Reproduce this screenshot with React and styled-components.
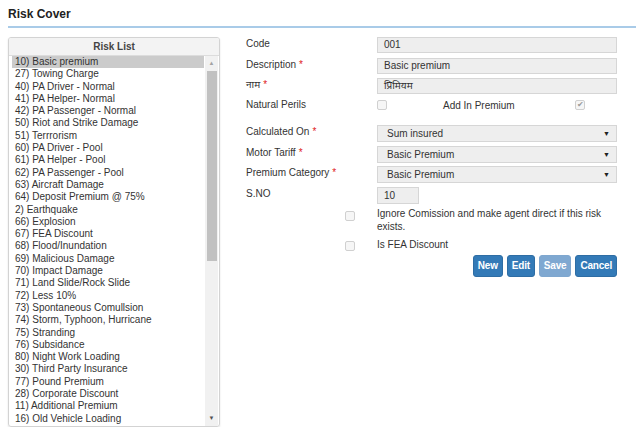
import React from 'react';
import styled, { createGlobalStyle } from 'styled-components';

const GlobalStyle = createGlobalStyle`
  * { box-sizing: border-box; }
  body {
    margin: 0;
    background: #fff;
    font-family: "Liberation Sans", Arial, "Noto Sans", sans-serif;
    font-size: 10px;
    color: #333;
  }
`;

const risks = [
  '10) Basic premium', '27) Towing Charge', '40) PA Driver - Normal', '41) PA Helper- Normal',
  '42) PA Passenger - Normal', '50) Riot and Strike Damage', '51) Terrrorism', '60) PA Driver - Pool',
  '61) PA Helper - Pool', '62) PA Passenger - Pool', '63) Aircraft Damage', '64) Deposit Premium @ 75%',
  '2) Earthquake', '66) Explosion', '67) FEA Discount', '68) Flood/Inundation', '69) Malicious Damage',
  '70) Impact Damage', '71) Land Slide/Rock Slide', '72) Less 10%', '73) Spontaneous Comullsion',
  '74) Storm, Typhoon, Hurricane', '75) Stranding', '76) Subsidance', '80) Night Work Loading',
  '30) Third Party Insurance', '77) Pound Premium', '28) Corporate Discount', '11) Additional Premium',
  '16) Old Vehicle Loading',
];

const Page = styled.div`
  padding: 7px 0 0 8px;
`;

const Title = styled.h1`
  margin: 0;
  font-size: 12px;
  line-height: 14px;
  font-weight: bold;
  color: #222;
`;

const Rule = styled.div`
  height: 2px;
  background: #a9cbe8;
  margin: 5px 0 9px;
`;

const Body = styled.div`
  display: flex;
  align-items: flex-start;
  gap: 26px;
`;

const Panel = styled.div`
  width: 212px;
  height: 390px;
  border: 1px solid #d3d3d3;
  border-radius: 3px;
  box-shadow: 0 1px 2px rgba(0, 0, 0, 0.12);
  display: flex;
  flex-direction: column;
  overflow: hidden;
`;

const PanelHead = styled.div`
  height: 18px;
  line-height: 18px;
  text-align: center;
  font-weight: bold;
  color: #444;
  background: #f3f3f3;
  border-bottom: 1px solid #dcdcdc;
`;

const ListBox = styled.div`
  flex: 1;
  display: flex;
  padding: 0 1px 0 3px;
  min-height: 0;
`;

const Items = styled.div`
  flex: 1;
  overflow: hidden;
`;

const Item = styled.div`
  height: 12.3px;
  line-height: 12.3px;
  padding-left: 3px;
  white-space: nowrap;
  color: #333;
  background: ${p => (p.$selected ? '#cbcbcb' : 'transparent')};
`;

const ScrollBar = styled.div`
  width: 13px;
  background: #f1f1f1;
  display: flex;
  flex-direction: column;
  align-items: center;
  margin-left: 1px;
`;

const Arrow = styled.div`
  height: 15px;
  line-height: 15px;
  font-size: 6px;
  color: ${p => (p.$dim ? '#a3a3a3' : '#505050')};
`;

const Thumb = styled.div`
  width: 10px;
  height: 190px;
  background: #c1c1c1;
`;

const Track = styled.div`
  flex: 1;
`;

const Form = styled.div`
  width: 371px;
  display: flex;
  flex-direction: column;
`;

const Row = styled.div`
  display: grid;
  grid-template-columns: 131px 240px;
  align-items: center;
  margin-top: ${p => p.$gap || 0}px;
`;

const Label = styled.label`
  color: #333;
  align-self: start;
  line-height: 14px;
`;

const Req = styled.span`
  color: #e02020;
  margin-left: 3px;
`;

const TextBox = styled.div`
  width: ${p => p.$w || 240}px;
  height: ${p => p.$h || 16}px;
  line-height: ${p => (p.$h || 16) - 2}px;
  padding: 0 6px;
  background: #eeeeee;
  border: 1px solid #d6d6d6;
  color: #333;
`;

const SelectBox = styled.div`
  height: 17px;
  padding: 0 6px 0 9px;
  display: flex;
  align-items: center;
  justify-content: space-between;
  background: #eeeeee;
  border: 1px solid #d6d6d6;
  color: #333;
`;

const Caret = styled.span`
  font-size: 7px;
  color: #222;
`;

const Check = styled.span`
  display: inline-flex;
  align-items: center;
  justify-content: center;
  width: 10px;
  height: 10px;
  border: 1px solid #d0d0d0;
  border-radius: 2px;
  background: #f6f6f6;
  font-size: 8px;
  color: #9a9a9a;
  line-height: 1;
`;

const Perils = styled.div`
  display: flex;
  align-items: center;
  height: 14px;
`;

const PerilsText = styled.span`
  margin-left: 56px;
  width: 132px;
`;

const SideCheck = styled.div`
  justify-self: end;
  margin-right: 22px;
  align-self: start;
  padding-top: ${p => p.$top || 0}px;
`;

const Note = styled.div`
  line-height: 13px;
`;

const Buttons = styled.div`
  display: flex;
  justify-content: flex-end;
  gap: 4px;
  margin-top: 2px;
  width: 371px;
`;

const Btn = styled.button`
  height: 22px;
  padding: 0 4px;
  border: 1px solid ${p => (p.$disabled ? '#7fa7cf' : '#2e6da4')};
  border-radius: 3px;
  background: ${p => (p.$disabled ? '#7fa8d1' : '#337ab7')};
  color: #fff;
  font-family: inherit;
  font-size: 10px;
  font-weight: bold;
  letter-spacing: -0.2px;
`;

export default function App() {
  return (
    <>
      <GlobalStyle />
      <Page>
        <Title>Risk Cover</Title>
        <Rule />
        <Body>
          <Panel>
            <PanelHead>Risk List</PanelHead>
            <ListBox>
              <Items>
                {risks.map((r, i) => (
                  <Item key={r} $selected={i === 0}>{r}</Item>
                ))}
              </Items>
              <ScrollBar>
                <Arrow $dim>▲</Arrow>
                <Thumb />
                <Track />
                <Arrow>▼</Arrow>
              </ScrollBar>
            </ListBox>
          </Panel>

          <Form>
            <Row>
              <Label>Code</Label>
              <TextBox>001</TextBox>
            </Row>
            <Row $gap={4.5}>
              <Label>Description<Req>*</Req></Label>
              <TextBox>Basic premium</TextBox>
            </Row>
            <Row $gap={4.5}>
              <Label>नाम<Req>*</Req></Label>
              <TextBox>प्रिमियम</TextBox>
            </Row>
            <Row $gap={4}>
              <Label>Natural Perils</Label>
              <Perils>
                <Check />
                <PerilsText>Add In Premium</PerilsText>
                <Check>✔</Check>
              </Perils>
            </Row>
            <Row $gap={13}>
              <Label>Calculated On<Req>*</Req></Label>
              <SelectBox>Sum insured<Caret>▼</Caret></SelectBox>
            </Row>
            <Row $gap={3.5}>
              <Label>Motor Tariff<Req>*</Req></Label>
              <SelectBox>Basic Premium<Caret>▼</Caret></SelectBox>
            </Row>
            <Row $gap={3.5}>
              <Label>Premium Category<Req>*</Req></Label>
              <SelectBox>Basic Premium<Caret>▼</Caret></SelectBox>
            </Row>
            <Row $gap={3.5}>
              <Label>S.NO</Label>
              <TextBox $w={42} $h={17}>10</TextBox>
            </Row>
            <Row $gap={3}>
              <SideCheck $top={4}><Check /></SideCheck>
              <Note>Ignore Comission and make agent direct if this risk exists.</Note>
            </Row>
            <Row $gap={4}>
              <SideCheck $top={4}><Check /></SideCheck>
              <Note>Is FEA Discount</Note>
            </Row>
            <Buttons>
              <Btn>New</Btn>
              <Btn>Edit</Btn>
              <Btn $disabled>Save</Btn>
              <Btn>Cancel</Btn>
            </Buttons>
          </Form>
        </Body>
      </Page>
    </>
  );
}
